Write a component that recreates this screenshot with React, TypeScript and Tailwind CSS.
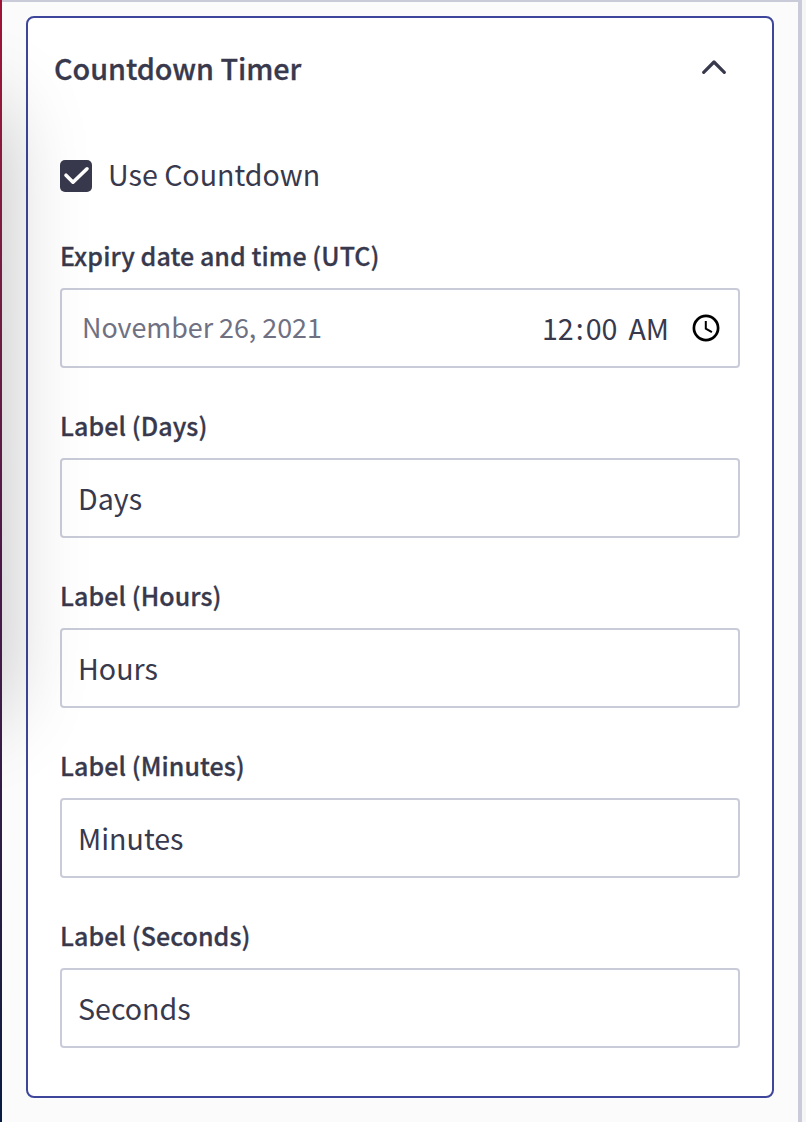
import type { ReactNode } from 'react';

const labels = ['Days', 'Hours', 'Minutes', 'Seconds'];

function FieldLabel({ children }: { children: ReactNode }) {
  return (
    <div className="flex h-[30px] items-center pb-1 text-[25px] leading-[30px] font-medium tracking-[0.07px] whitespace-pre [-webkit-text-stroke:0.3px_#38394d]">
      <span>{children}</span>
    </div>
  );
}

export default function App() {
  return (
    <div className="relative flex h-[1122px] w-[806px] overflow-hidden bg-[#fbfbfb] font-['Noto_Sans_CJK_SC',sans-serif] text-[#38394d]">
      <div className="w-[2px] shrink-0 bg-linear-to-b from-[#a01236] via-[#4b1947] to-[#071b40]" />
      <main className="w-[796px] shrink-0 border-t-2 border-[#c9cbd8] px-6 pt-[14px]">
        <section className="h-[1082px] rounded-lg border-2 border-[#3d469b] bg-white px-8">
          <header className="-mx-[6px] flex h-[98px] items-center justify-between pr-[19px]">
            <h1 className="pt-[2px] text-[28.8px] leading-10 font-medium tracking-[-0.06px] [-webkit-text-stroke:0.3px_#38394d]">Countdown Timer</h1>
            <svg className="h-[14px] w-[26px]" viewBox="0 0 26 14" fill="none" stroke="currentColor" strokeWidth="3.2" strokeLinecap="round" strokeLinejoin="round">
              <path d="M2.7 12.3 13 2l10.3 10.3" />
            </svg>
          </header>
          <div className="mt-11 flex h-8 items-center gap-4">
            <span className="flex size-8 items-center justify-center rounded-[5px] bg-[#38394d]">
              <svg className="size-8" viewBox="0 0 32 32" fill="none" stroke="white" strokeWidth="3.6" strokeLinecap="round" strokeLinejoin="round">
                <path d="m6 15.2 7 7L27 8.8" />
              </svg>
            </span>
            <span className="pb-1 text-[28.6px] leading-8">Use Countdown</span>
          </div>
          <div className="mt-[50px]">
            <FieldLabel>Expiry date and time (UTC)</FieldLabel>
            <div className="mt-4 flex h-20 items-center rounded border-2 border-[#c9cbd8] pr-[18px] pl-5">
              <span className="pb-[2px] text-[26.9px] leading-8 tracking-[-0.03px] text-[#6f7183]">November 26, 2021</span>
              <div className="ml-auto flex text-[28.6px] leading-8">
                <span className="mr-[2px]">12</span>
                <span className="mr-[2px]">:</span>
                <span className="mr-[11px]">00</span>
                <span>AM</span>
              </div>
              <svg className="ml-[23px] size-7" viewBox="0 0 28 28" fill="none" stroke="black" strokeWidth="2.7">
                <circle cx="14" cy="14" r="12.1" />
                <path d="M13.8 7v7.6l6.1 3.6" strokeWidth="2" />
              </svg>
            </div>
          </div>
          {labels.map((label) => (
            <div key={label} className="mt-11">
              <FieldLabel>Label ({label})</FieldLabel>
              <div className="mt-4 flex h-20 items-center rounded border-2 border-[#c9cbd8] px-4">
                <span className="text-[28.6px] leading-8">{label}</span>
              </div>
            </div>
          ))}
        </section>
      </main>
      <div className="w-1 shrink-0 bg-[#c9cbd8]" />
      <div className="w-1 shrink-0 bg-[#f6f6f6]" />
      <div className="pointer-events-none absolute inset-y-0 right-0 left-[2px] overflow-hidden">
        <div className="absolute top-[108px] -left-[400px] h-[604px] w-[400px] shadow-[0_0_80px_rgba(0,0,0,0.23)]" />
      </div>
    </div>
  );
}
